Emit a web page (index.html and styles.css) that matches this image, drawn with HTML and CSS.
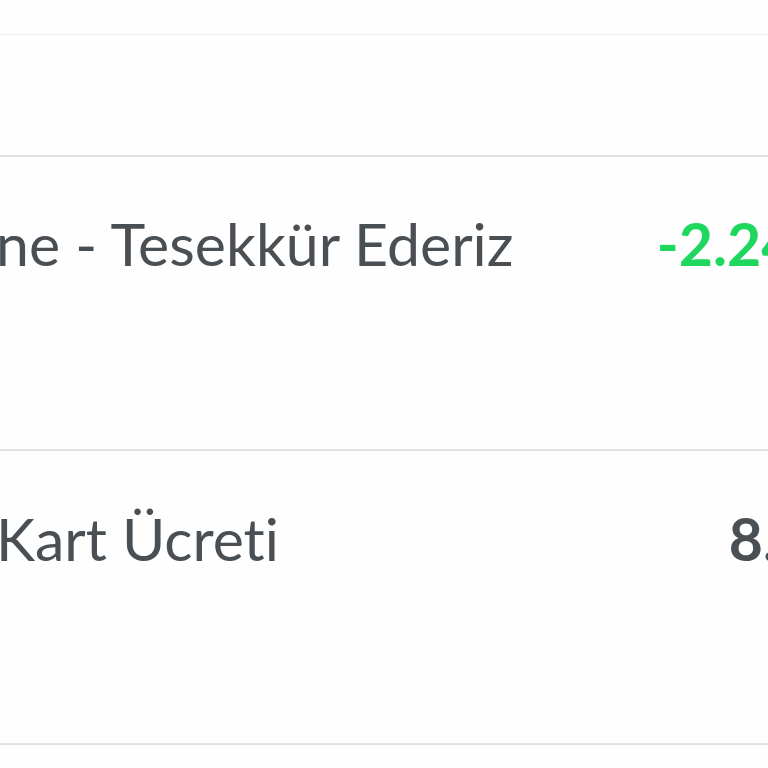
FILE: index.html
```html
<!DOCTYPE html>
<html lang="tr">
<head>
    <meta charset="UTF-8" />
    <meta name="viewport" content="width=device-width, initial-scale=1.0" />
    <title>Sipariş Özeti</title>
    <link rel="stylesheet" href="styles.css">
</head>
<body>
    <div class="summary">
        <div class="summary-row summary-row--top"></div>
        <div class="summary-row summary-row--spacer"></div>

        <div class="summary-row summary-row--item">
            <span class="item-label">ne - Tesekkür Ederiz</span>
            <span class="item-amount discount">-2.24 TL</span>
        </div>

        <div class="summary-row summary-row--item thin">
            <span class="item-label">Kart Ücreti</span>
            <span class="item-amount fee">8.90 TL</span>
        </div>

        <div class="summary-row summary-row--bottom"></div>
    </div>
</body>
</html>
```

FILE: styles.css
```css
* {
    box-sizing: border-box;
}

body {
    font-family: 'Lato', 'Noto Sans', sans-serif;
    margin: 0;
    background-color: #fefefe;
    color: #4a4f54;
    overflow: hidden;
    font-variant-ligatures: none;
}

.summary {
    display: flex;
    flex-direction: column;
    width: 930px;
}

.summary-row {
    border-bottom: 2px solid #e2e2e2;
}

.summary-row--top {
    height: 35px;
    border-bottom: 1px solid #f0f0f0;
}

.summary-row--spacer {
    height: 122px;
}

.summary-row--item {
    display: flex;
    justify-content: space-between;
    align-items: flex-start;
    height: 294px;
    padding: 57px 0 0 0;
    font-size: 59px;
    line-height: 60px;
}

.summary-row--item.thin {
    height: 293px;
    padding-top: 58px;
    border-bottom: 1px solid #e6e6e6;
}

.item-label {
    white-space: nowrap;
    margin-left: -4px;
}

.item-amount {
    white-space: nowrap;
    font-weight: 700;
}

.fee {
    margin-right: 6px;
}

.discount {
    color: #1fd75e;
    margin-right: 56px;
}

.summary-row--bottom {
    height: 40px;
    border-top: 1px solid #e0e0e0;
}
```
